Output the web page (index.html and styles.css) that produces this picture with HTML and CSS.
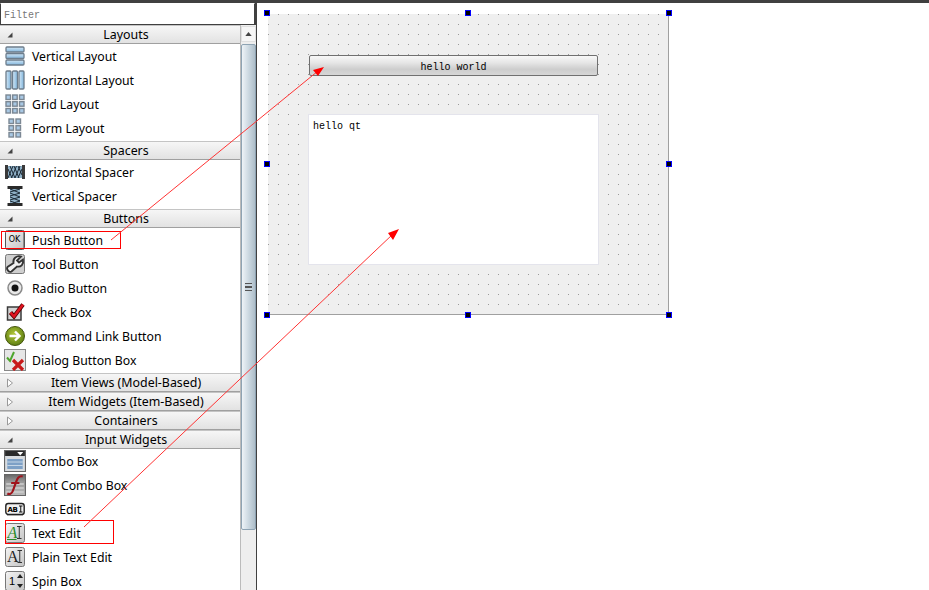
FILE: index.html
```html
<!DOCTYPE html>
<html lang="en">
<head>
  <meta charset="UTF-8" />
  <title>Qt Designer</title>
  <link rel="stylesheet" href="styles.css">
</head>
<body>
  <svg class="defs">
    <defs>
      <linearGradient id="bluev" x1="0" y1="0" x2="0" y2="1"><stop offset="0" stop-color="#d4e8f6"/><stop offset="1" stop-color="#7fb4dc"/></linearGradient>
      <linearGradient id="blueh" x1="0" y1="0" x2="1" y2="0"><stop offset="0" stop-color="#d4e8f6"/><stop offset="1" stop-color="#7fb4dc"/></linearGradient>
      <linearGradient id="bevel" x1="0" y1="0" x2="1" y2="1"><stop offset="0" stop-color="#f4f4f4"/><stop offset="1" stop-color="#c4c4c4"/></linearGradient>
      <radialGradient id="green" cx="0.45" cy="0.4" r="0.6"><stop offset="0" stop-color="#b4c83a"/><stop offset="1" stop-color="#5f8012"/></radialGradient>
      <linearGradient id="fontbg" x1="0" y1="0" x2="0" y2="1"><stop offset="0" stop-color="#666"/><stop offset="0.35" stop-color="#999"/><stop offset="1" stop-color="#bbb"/></linearGradient>
    </defs>
  </svg>
  <div class="topbar"></div>
  <div class="main">
    <div class="sidebar">
      <input class="filter" type="text" placeholder="Filter">
      <div class="box">
        <div class="list">
          <div class="cat open"><svg class="tri" viewBox="0 0 8 8"><path d="M1.500 6.500 6.500 6.500 6.500 1.500Z"/></svg>Layouts</div>
          <div class="row"><svg class="ico" viewBox="0 0 20 20" fill="url(#bluev)" stroke="#6d7d8c" stroke-width="1.300"><rect x="1" y="1" width="18" height="5" rx="1"/><rect x="1" y="7.500" width="18" height="5" rx="1"/><rect x="1" y="14" width="18" height="5" rx="1"/></svg>Vertical Layout</div>
          <div class="row"><svg class="ico" viewBox="0 0 20 20" fill="url(#blueh)" stroke="#6d7d8c" stroke-width="1.300"><rect x="1" y="1" width="5" height="18" rx="1"/><rect x="7.500" y="1" width="5" height="18" rx="1"/><rect x="14" y="1" width="5" height="18" rx="1"/></svg>Horizontal Layout</div>
          <div class="row"><svg class="ico" viewBox="0 0 20 20" fill="#a8c8e4" stroke="#7c8894" stroke-width="1.400"><rect x="1" y="1" width="4.500" height="4.500"/><rect x="7.700" y="1" width="4.500" height="4.500"/><rect x="14.500" y="1" width="4.500" height="4.500"/><rect x="1" y="7.700" width="4.500" height="4.500"/><rect x="7.700" y="7.700" width="4.500" height="4.500"/><rect x="14.500" y="7.700" width="4.500" height="4.500"/><rect x="1" y="14.500" width="4.500" height="4.500"/><rect x="7.700" y="14.500" width="4.500" height="4.500"/><rect x="14.500" y="14.500" width="4.500" height="4.500"/></svg>Grid Layout</div>
          <div class="row"><svg class="ico" viewBox="0 0 20 20" fill="#a8c8e4" stroke="#7c8894" stroke-width="1.400"><rect x="4" y="1" width="4.500" height="4.500"/><rect x="11" y="1" width="4.500" height="4.500"/><rect x="4" y="7.700" width="4.500" height="4.500"/><rect x="11" y="7.700" width="4.500" height="4.500"/><rect x="4" y="14.500" width="4.500" height="4.500"/><rect x="11" y="14.500" width="4.500" height="4.500"/></svg>Form Layout</div>

          <div class="cat open"><svg class="tri" viewBox="0 0 8 8"><path d="M1.500 6.500 6.500 6.500 6.500 1.500Z"/></svg>Spacers</div>
          <div class="row"><svg class="ico" viewBox="0 0 20 20"><rect x="0" y="3" width="3" height="14" fill="#3a3a3a"/><rect x="17" y="3" width="3" height="14" fill="#3a3a3a"/><rect x="3" y="4" width="14" height="12" fill="#8fb0c6"/><path d="M3 16 8 4M6.500 16 11.500 4M10 16 15 4M13 16 17 7M3 7 7 16M5 4 10 16M9 4 14 16M13 4 17 13" stroke="#1c2a36" fill="none"/></svg>Horizontal Spacer</div>
          <div class="row"><svg class="ico" viewBox="0 0 20 20"><rect x="2.500" y="0" width="15" height="3" fill="#2a2a2a"/><rect x="2.500" y="17" width="15" height="3" fill="#2a2a2a"/><rect x="5" y="3" width="10" height="14" fill="#8fb0c6"/><path d="M5 3 15 7M5 7 15 11M5 11 15 15M5 15 11 17M15 3 5 6M15 7 5 10M15 11 5 14M15 15 8 17" stroke="#1c2a36" fill="none"/></svg>Vertical Spacer</div>

          <div class="cat open"><svg class="tri" viewBox="0 0 8 8"><path d="M1.500 6.500 6.500 6.500 6.500 1.500Z"/></svg>Buttons</div>
          <div class="row"><svg class="ico" viewBox="0 0 20 20"><rect x="0.500" y="0.500" width="19" height="19" rx="2" fill="url(#bevel)" stroke="#555"/><path d="M1 18.500H19M18.500 2V19" stroke="#8a8a8a"/><text x="9.500" y="12" class="ok">OK</text></svg>Push Button</div>
          <div class="row"><svg class="ico" viewBox="0 0 20 20"><rect x="0.500" y="0.500" width="19" height="19" rx="2" fill="#cfcfcf" stroke="#777"/><path d="M16 2.500C12 1 7.500 4.500 8.500 9L2.500 13C1 15 4 19 6.500 17.500L12 12.500C16 13.500 19 10 18 5.500L14 8.500 12 6.500Z" fill="#f2f2f2" stroke="#333" stroke-width="1.800"/></svg>Tool Button</div>
          <div class="row"><svg class="ico" viewBox="0 0 20 20"><circle cx="10" cy="10" r="7" fill="#e8e8e8" stroke="#8a8a8a" stroke-width="1.500"/><circle cx="10" cy="10" r="3.500" fill="#111"/></svg>Radio Button</div>
          <div class="row"><svg class="ico" viewBox="0 0 20 20"><rect x="2.500" y="5" width="13.500" height="13" fill="#d4d4d4" stroke="#3a3a3a" stroke-width="1.500"/><path d="M5.500 10.500 9 14.500 18 2.500" fill="none" stroke="#500" stroke-width="4.200"/><path d="M5.500 10.500 9 14.500 18 2.500" fill="none" stroke="#e01420" stroke-width="2.600"/></svg>Check Box</div>
          <div class="row"><svg class="ico" viewBox="0 0 20 20"><circle cx="10" cy="10" r="9.500" fill="url(#green)" stroke="#46560e"/><path d="M4.500 10H14M10 5.500 14.500 10 10 14.500" fill="none" stroke="#fff" stroke-width="2.400"/></svg>Command Link Button</div>
          <div class="row"><svg class="ico wide" viewBox="0 0 22 22"><rect x="0.500" y="0.500" width="21" height="21" fill="#e6e6e6" stroke="#888"/><path d="M3 8.500 6 12 10 3" fill="none" stroke="#4fa52c" stroke-width="2"/><path d="M9 11 19 21M19 11 9 21" stroke="#c81a1a" stroke-width="3.200"/></svg>Dialog Button Box</div>

          <div class="cat"><svg class="tri" viewBox="0 0 8 10"><path d="M1.500 1 6.500 5 1.500 9Z" fill="#fff" stroke="#999"/></svg>Item Views (Model-Based)</div>
          <div class="cat"><svg class="tri" viewBox="0 0 8 10"><path d="M1.500 1 6.500 5 1.500 9Z" fill="#fff" stroke="#999"/></svg>Item Widgets (Item-Based)</div>
          <div class="cat"><svg class="tri" viewBox="0 0 8 10"><path d="M1.500 1 6.500 5 1.500 9Z" fill="#fff" stroke="#999"/></svg>Containers</div>
          <div class="cat open"><svg class="tri" viewBox="0 0 8 8"><path d="M1.500 6.500 6.500 6.500 6.500 1.500Z"/></svg>Input Widgets</div>
          <div class="row"><svg class="ico wide" viewBox="0 0 20 22" preserveAspectRatio="none"><rect x="0.500" y="0.500" width="19" height="21" fill="#d8dce0" stroke="#666"/><rect x="1" y="1" width="18" height="5" fill="#2a2a2a"/><path d="M12 2h5.500L14.750 5.500Z" fill="#fff"/><rect x="3" y="9" width="14" height="10" fill="#7da0c6"/><path d="M3 12H17M3 15.500H17" stroke="#c6d6e6"/></svg>Combo Box</div>
          <div class="row"><svg class="ico wide" viewBox="0 0 20 22" preserveAspectRatio="none"><rect x="0.500" y="0.500" width="19" height="21" fill="url(#fontbg)" stroke="#666"/><path d="M2 10H18M2 14H18M2 18H18" stroke="#d0d0d0" stroke-width="1.500"/><path d="M17 2.500C13 1.500 12 5 11 8L8 17C7 20 5 20.500 3 19.500M6.500 9H14" fill="none" stroke="#a0141c" stroke-width="2"/></svg>Font Combo Box</div>
          <div class="row"><svg class="ico" viewBox="0 0 20 20"><rect x="0.800" y="4.500" width="18.400" height="11" rx="2.500" fill="#f0f0f0" stroke="#222" stroke-width="1.400"/><path d="M2 16.500H18" stroke="#aaa"/><text x="2.500" y="12.700" class="ab">AB</text><path d="M14 7h3.500M14 13h3.500M15.750 7V13" stroke="#111"/></svg>Line Edit</div>
          <div class="row"><svg class="ico" viewBox="0 0 20 20"><rect x="0.500" y="0.500" width="19" height="19" rx="2" fill="url(#bevel)" stroke="#777"/><text x="2.500" y="14.500" class="ai green">A</text><path d="M12 3.500h4.500M12 15.500h4.500M14.250 3.500V15.500" stroke="#333"/><path d="M2 16.500H11.500" stroke="#2a8a2a"/></svg>Text Edit</div>
          <div class="row"><svg class="ico" viewBox="0 0 20 20"><rect x="0.500" y="0.500" width="19" height="19" rx="2" fill="url(#bevel)" stroke="#777"/><text x="2" y="15" class="ai">A</text><path d="M12.500 3.500h4.500M12.500 15.500h4.500M14.750 3.500V15.500" stroke="#333"/></svg>Plain Text Edit</div>
          <div class="row"><svg class="ico" viewBox="0 0 20 20"><rect x="0.500" y="0.500" width="19" height="19" rx="2" fill="url(#bevel)" stroke="#777"/><text x="4" y="14" class="one">1</text><path d="M12 7 15 3 18 7ZM12 13 15 17 18 13Z" fill="#222"/></svg>Spin Box</div>
        </div>
        <div class="scrollbar">
          <div class="arrow"><svg viewBox="0 0 8 5" width="7" height="4"><path d="M0 5 4 0 8 5Z" fill="#444"/></svg></div>
          <div class="thumb"><div class="grip"></div></div>
        </div>
      </div>
    </div>

    <div class="canvas">
      <div class="form">
        <div class="pushbutton">hello world</div>
        <div class="textedit">hello qt</div>
      </div>
      <span class="handle h1"></span><span class="handle h2"></span><span class="handle h3"></span>
      <span class="handle h4"></span><span class="handle h5"></span>
      <span class="handle h6"></span><span class="handle h7"></span><span class="handle h8"></span>
    </div>
  </div>

  <div class="mark mark1"></div>
  <div class="mark mark2"></div>
  <svg class="arrows" width="929" height="590" viewBox="0 0 929 590">
    <path d="M111 240 318 71M84 527 393 234" stroke="#f33" stroke-width="1" fill="none"/>
    <path d="M324 67 313 70 318 76ZM399 229 388 233 393 240Z" fill="#f00"/>
  </svg>
</body>
</html>
```

FILE: styles.css
```css
html, body {
  margin: 0;
  height: 100%;
  overflow: hidden;
}
body {
  position: relative;
  background: #fff;
  font-family: "Noto Sans", sans-serif;
  font-size: 12.25px;
  color: #000;
}
.defs {
  position: absolute;
  width: 0;
  height: 0;
}
.topbar {
  height: 3px;
  background: #404040;
}
.main {
  display: flex;
  height: 587px;
}
.sidebar {
  width: 255px;
  border-right: 2px solid #404040;
  flex: none;
  display: flex;
  flex-direction: column;
}
.filter {
  box-sizing: border-box;
  width: 255px;
  height: 22px;
  flex: none;
  padding: 2px 3px 0;
  border: 1px solid #404040;
  border-top: 1px solid #fff;
  font-family: "Liberation Mono", monospace;
  font-size: 10px;
  outline: none;
}
.filter::placeholder {
  color: #777;
}
.box {
  display: flex;
  flex: 1;
  min-height: 0;
}
.list {
  width: 240px;
  flex: none;
  overflow: hidden;
}
.cat {
  position: relative;
  box-sizing: border-box;
  height: 19px;
  padding-left: 12px;
  line-height: 18px;
  font-size: 12.4px;
  text-align: center;
  background: linear-gradient(#f6f6f6, #e2e2e2);
  border-bottom: 1px solid #a0a0a0;
  border-top: 1px solid #c4c4c4;
}
.cat.open {
  margin-bottom: 1px;
}
.tri {
  position: absolute;
  left: 6px;
  top: 4px;
  width: 8px;
  height: 10px;
  fill: #444;
}
.row {
  box-sizing: border-box;
  display: flex;
  align-items: center;
  height: 24px;
  padding: 0 0 2px 5px;
  gap: 7px;
}
.ico {
  width: 20px;
  height: 20px;
  flex: none;
}
.ico.wide {
  width: 22px;
  height: 22px;
  margin-left: -1px;
  margin-right: -1px;
}
.ok {
  font: 8px "DejaVu Sans", sans-serif;
  text-anchor: middle;
}
.ab {
  font: bold 7px "DejaVu Sans", sans-serif;
  letter-spacing: -0.3px;
}
.ai {
  font: 16px "Liberation Serif", serif;
  fill: #222;
}
.ai.green {
  fill: #2a8a2a;
  font-style: italic;
}
.one {
  font: 11px "Liberation Sans", sans-serif;
}
.scrollbar {
  width: 15px;
  flex: none;
  background: #eee;
  display: flex;
  flex-direction: column;
  border-left: 1px solid #bbb;
}
.arrow {
  height: 16px;
  margin-top: 1px;
  background: #f6f6f6;
  border: 1px solid #e0e0e0;
  box-sizing: border-box;
  display: flex;
  align-items: center;
  justify-content: center;
}
.thumb {
  height: 486px;
  margin-top: 2px;
  border: 1px solid #8ea3b3;
  border-radius: 2px;
  box-sizing: border-box;
  background: linear-gradient(90deg, #eef3f7, #c9d6df 55%, #aebec9);
  display: flex;
  align-items: center;
  justify-content: center;
}
.grip {
  width: 7px;
  height: 6px;
  border-top: 1px solid #555;
  border-bottom: 1px solid #555;
  background: linear-gradient(#c9d6df 40%, #555 40%, #555 60%, #c9d6df 60%);
}
.canvas {
  position: relative;
  flex: 1;
}
.form {
  box-sizing: border-box;
  width: 401px;
  height: 301px;
  margin: 11px 0 0 11px;
  border-right: 1px solid #a0a0a0;
  border-bottom: 1px solid #a0a0a0;
  background-color: #efefef;
  background-image: radial-gradient(circle at 0.5px 0.5px, #999 0.7px, transparent 0.8px);
  background-size: 10px 10px;
  padding: 41px 70px 0 41px;
}
.pushbutton {
  box-sizing: border-box;
  height: 21px;
  line-height: 24px;
  text-align: center;
  border: 1px solid #707070;
  border-radius: 2px;
  background: linear-gradient(#f8f8f8, #e6e6e6 35%, #cdcdcd 70%, #d6d6d6);
  font-family: "Liberation Mono", monospace;
  font-size: 10px;
}
.textedit {
  box-sizing: border-box;
  height: 151px;
  width: 291px;
  margin: 38px 0 0 -1px;
  background: #fff;
  border: 1px solid #e4e4ec;
  padding: 6px 4px;
  font-family: "Liberation Mono", monospace;
  font-size: 10px;
}
.handle {
  position: absolute;
  box-sizing: border-box;
  width: 6px;
  height: 6px;
  background: #000;
  border: 1px solid #00f;
}
.h1 { left: 7px; top: 7px; }
.h2 { left: 208px; top: 7px; }
.h3 { left: 409px; top: 7px; }
.h4 { left: 7px; top: 158px; }
.h5 { left: 409px; top: 158px; }
.h6 { left: 7px; top: 309px; }
.h7 { left: 208px; top: 309px; }
.h8 { left: 409px; top: 309px; }
.mark {
  position: absolute;
  box-sizing: border-box;
  border: 1px solid #f00;
}
.mark1 {
  left: 1px;
  top: 231px;
  width: 120px;
  height: 18px;
}
.mark2 {
  left: 5px;
  top: 520px;
  width: 109px;
  height: 24px;
}
.arrows {
  position: absolute;
  left: 0;
  top: 0;
  pointer-events: none;
}
```
